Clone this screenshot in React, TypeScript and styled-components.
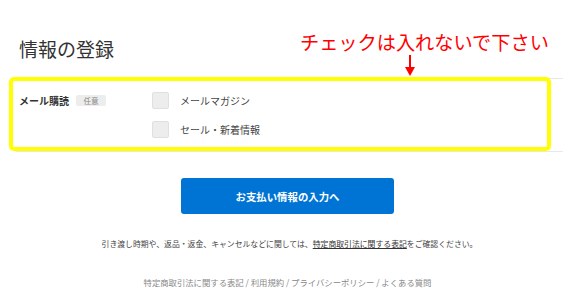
import React from "react";
import styled, { createGlobalStyle } from "styled-components";

const Global = createGlobalStyle`
  html, body { margin: 0; padding: 0; background: #fff; }
  body { font-family: "Noto Sans CJK JP", "Noto Sans", sans-serif; color: #333; }
`;

const Page = styled.div`
  position: relative;
  width: 579px;
  height: 298px;
  box-sizing: border-box;
  padding: 35px 16px 0 16px;
`;

const Title = styled.h1`
  margin: 0 0 16px 3px;
  font-size: 19px;
  line-height: 27px;
  font-weight: 400;
  color: #333;
`;

const Table = styled.div`
  display: grid;
  grid-template-columns: 136px 1fr;
  border-top: 1px solid #e8e8e8;
  border-bottom: 1px solid #e8e8e8;
  padding: 13px 0 13px;
`;

const LabelCell = styled.div`
  display: flex;
  align-items: center;
  height: 17px;
  padding-left: 3px;
  gap: 7px;
`;

const LabelText = styled.span`
  font-size: 10px;
  font-weight: 700;
  color: #333;
  line-height: 17px;
`;

const Badge = styled.span`
  display: inline-flex;
  align-items: center;
  justify-content: center;
  width: 30px;
  height: 11px;
  background: #ededed;
  border-radius: 2px;
  font-size: 7.5px;
  line-height: 11px;
  color: #888;
`;

const Options = styled.div`
  display: flex;
  flex-direction: column;
  gap: 12px;
`;

const Option = styled.label`
  display: flex;
  align-items: center;
  gap: 11px;
  height: 17px;
`;

const Box = styled.span`
  width: 17px;
  height: 17px;
  box-sizing: border-box;
  background: #ededed;
  border: 1px solid #e0e0e0;
  border-radius: 2px;
`;

const OptionText = styled.span`
  font-size: 10px;
  color: #444;
  line-height: 17px;
`;

const ButtonRow = styled.div`
  display: flex;
  justify-content: center;
  margin-top: 26px;
`;

const PrimaryButton = styled.button`
  width: 213px;
  height: 36px;
  margin-right: 4px;
  border: none;
  border-radius: 3px;
  background: #0074d4;
  color: #fff;
  font-family: inherit;
  font-size: 10.4px;
  font-weight: 700;
  cursor: pointer;
`;

const Notice = styled.p`
  margin: 24px 0 0;
  text-align: center;
  font-size: 7.85px;
  line-height: 12px;
  color: #444;
`;

const NoticeLink = styled.a`
  color: #333;
  text-decoration: underline;
`;

const Footer = styled.p`
  margin: 26px 0 0;
  padding-right: 4px;
  text-align: center;
  font-size: 8.35px;
  line-height: 12px;
  color: #888;
`;

const AnnotationText = styled.div`
  position: absolute;
  left: 300px;
  top: 29px;
  font-size: 19.2px;
  line-height: 27px;
  color: #ff0000;
  white-space: nowrap;
`;

const Arrow = styled.svg`
  position: absolute;
  left: 405px;
  top: 55px;
`;

const Highlight = styled.div`
  position: absolute;
  left: 9px;
  top: 77px;
  width: 542px;
  height: 74px;
  box-sizing: border-box;
  border: 4px solid #ffff00;
  border-radius: 5px;
  pointer-events: none;
`;

export default function App() {
  return (
    <>
      <Global />
      <Page>
        <Title>情報の登録</Title>
        <Table>
          <LabelCell>
            <LabelText>メール購読</LabelText>
            <Badge>任意</Badge>
          </LabelCell>
          <Options>
            <Option>
              <Box />
              <OptionText>メールマガジン</OptionText>
            </Option>
            <Option>
              <Box />
              <OptionText>セール・新着情報</OptionText>
            </Option>
          </Options>
        </Table>
        <ButtonRow>
          <PrimaryButton>お支払い情報の入力へ</PrimaryButton>
        </ButtonRow>
        <Notice>
          引き渡し時期や、返品・返金、キャンセルなどに関しては、
          <NoticeLink>特定商取引法に関する表記</NoticeLink>をご確認ください。
        </Notice>
        <Footer>
          特定商取引法に関する表記 / 利用規約 / プライバシーポリシー / よくある質問
        </Footer>
        <AnnotationText>チェックは入れないで下さい</AnnotationText>
        <Arrow width="10" height="22" viewBox="0 0 10 22">
          <rect x="4" y="0" width="2" height="13" fill="#ff0000" />
          <polygon points="0,12 10,12 5,21" fill="#ff0000" />
        </Arrow>
        <Highlight />
      </Page>
    </>
  );
}
